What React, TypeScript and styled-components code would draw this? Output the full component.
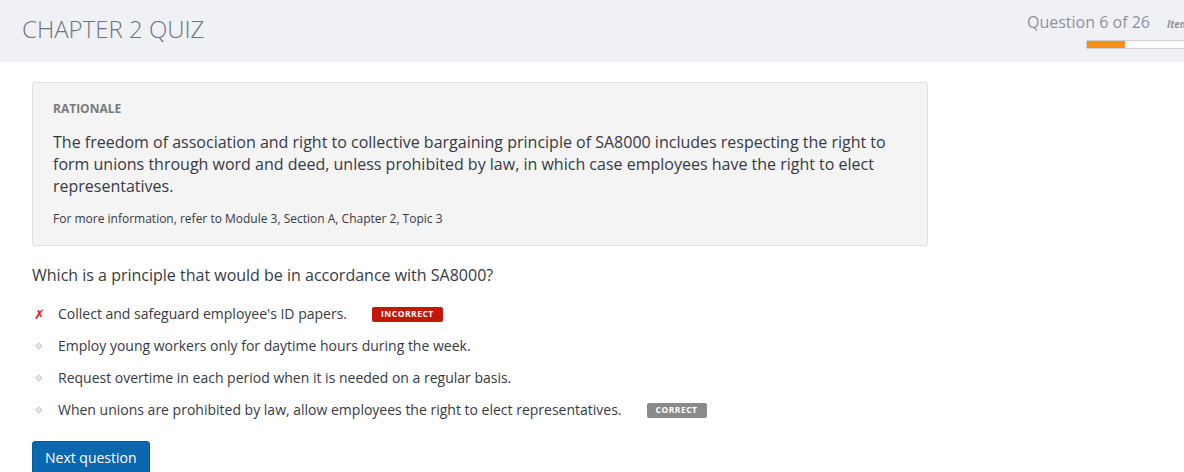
import React from "react";
import styled, { createGlobalStyle } from "styled-components";

const Global = createGlobalStyle`
  html, body { margin: 0; padding: 0; background: #ffffff; }
  body { font-family: "Open Sans", "Liberation Sans", sans-serif; overflow: hidden; width: 1184px; height: 472px; }
  * { box-sizing: border-box; }
`;

const Page = styled.div`
  width: 1184px;
  height: 472px;
  overflow: hidden;
`;

const Header = styled.header`
  height: 62px;
  background: #f0f1f5;
  display: flex;
  align-items: flex-start;
  overflow: hidden;
`;

const Title = styled.h1`
  flex: 1;
  margin: 0;
  padding: 13px 0 0 22px;
  font-size: 24px;
  line-height: 32px;
  font-weight: 300;
  color: #6b7480;
  letter-spacing: 0;
`;

const Status = styled.div`
  flex-shrink: 0;
  width: 220px;
  margin-right: -63px;
  padding-top: 10px;
  display: flex;
  flex-direction: column;
`;

const StatusRow = styled.div`
  display: flex;
  align-items: baseline;
  gap: 17px;
  white-space: nowrap;
`;

const Counter = styled.span`
  font-size: 16px;
  line-height: 24px;
  font-weight: 400;
  color: #8c939d;
`;

const ItemLabel = styled.span`
  font-size: 10px;
  font-weight: 700;
  font-style: italic;
  color: #8c939d;
`;

const Progress = styled.div`
  margin: 6px 0 0 59px;
  width: 150px;
  height: 9px;
  background: #ffffff;
  border: 1px solid #cfd0d2;
  border-radius: 1px;
  overflow: hidden;
`;

const ProgressFill = styled.div`
  height: 100%;
  background: #f39020;
`;

const Main = styled.main`
  padding: 20px 0 0 32px;
`;

const Rationale = styled.section`
  width: 896px;
  background: #f4f4f4;
  border: 1px solid #e0e0e0;
  border-radius: 3px;
  padding: 17px 20px 17px 20px;
`;

const RationaleLabel = styled.div`
  font-size: 12px;
  line-height: 18px;
  font-weight: 700;
  color: #7a7a7a;
  text-transform: uppercase;
`;

const RationaleText = styled.p`
  margin: 13px 0 0 0;
  font-size: 16px;
  line-height: 22px;
  color: #373a45;
  width: 840px;
`;

const MoreInfo = styled.p`
  margin: 13px 0 0 0;
  font-size: 12px;
  line-height: 18px;
  color: #373a45;
`;

const Question = styled.p`
  margin: 18px 0 0 0;
  font-size: 16px;
  line-height: 22px;
  color: #373a45;
`;

const Options = styled.ul`
  list-style: none;
  margin: 18px 0 0 0;
  padding: 0;
  display: flex;
  flex-direction: column;
  gap: 12px;
`;

const Option = styled.li`
  display: flex;
  align-items: center;
  height: 20px;
  font-size: 14px;
  line-height: 20px;
  color: #373a45;
`;

const Marker = styled.span`
  width: 26px;
  flex-shrink: 0;
  display: flex;
  align-items: center;
  padding-left: 2px;
`;

const Cross = styled.span`
  color: #ea1520;
  font-size: 13px;
  font-weight: 700;
  font-style: italic;
  font-family: "DejaVu Sans", sans-serif;
  line-height: 1;
`;

const Badge = styled.span<{ $tone: "bad" | "good" }>`
  margin-left: 25px;
  height: 15px;
  padding: 0 9px;
  display: inline-flex;
  align-items: center;
  border-radius: 2px;
  font-size: 8.5px;
  font-weight: 700;
  letter-spacing: 0.5px;
  color: #ffffff;
  background: ${(p) => (p.$tone === "bad" ? "#c4170c" : "#8a8a8a")};
`;

const NextButton = styled.button`
  margin-top: 21px;
  height: 36px;
  padding: 0 12px 4px 12px;
  background: #0a67b0;
  color: #ffffff;
  border: 1px solid #075a9c;
  border-radius: 3px;
  font-family: "Open Sans", "Liberation Sans", sans-serif;
  font-size: 14px;
  font-weight: 400;
  display: flex;
  align-items: center;
  cursor: pointer;
`;

const Diamond = () => (
  <svg width="8" height="8" viewBox="0 0 8 8" style={{ marginLeft: 1 }}>
    <path d="M4 0.8 L7.2 4 L4 7.2 L0.8 4 Z" fill="#e4e4e4" stroke="#c2c2c2" strokeWidth="1" />
  </svg>
);

type Opt = { text: string; state?: "incorrect" | "correct"; chosen?: boolean };

const options: Opt[] = [
  { text: "Collect and safeguard employee's ID papers.", state: "incorrect", chosen: true },
  { text: "Employ young workers only for daytime hours during the week." },
  { text: "Request overtime in each period when it is needed on a regular basis." },
  { text: "When unions are prohibited by law, allow employees the right to elect representatives.", state: "correct" },
];

export default function App() {
  const current = 6;
  const total = 26;
  return (
    <Page>
      <Global />
      <Header>
        <Title>CHAPTER 2 QUIZ</Title>
        <Status>
          <StatusRow>
            <Counter>Question {current} of {total}</Counter>
            <ItemLabel>Item</ItemLabel>
          </StatusRow>
          <Progress>
            <ProgressFill style={{ width: `${(current / total) * 100 * 1.1}%` }} />
          </Progress>
        </Status>
      </Header>
      <Main>
        <Rationale>
          <RationaleLabel>Rationale</RationaleLabel>
          <RationaleText>
            The freedom of association and right to collective bargaining principle of SA8000 includes respecting the right to form unions through word and deed, unless prohibited by law, in which case employees have the right to elect representatives.
          </RationaleText>
          <MoreInfo>For more information, refer to Module 3, Section A, Chapter 2, Topic 3</MoreInfo>
        </Rationale>
        <Question>Which is a principle that would be in accordance with SA8000?</Question>
        <Options>
          {options.map((o) => (
            <Option key={o.text}>
              <Marker>{o.chosen ? <Cross>✗</Cross> : <Diamond />}</Marker>
              <span>{o.text}</span>
              {o.state === "incorrect" && <Badge $tone="bad">INCORRECT</Badge>}
              {o.state === "correct" && <Badge $tone="good">CORRECT</Badge>}
            </Option>
          ))}
        </Options>
        <NextButton>Next question</NextButton>
      </Main>
    </Page>
  );
}
